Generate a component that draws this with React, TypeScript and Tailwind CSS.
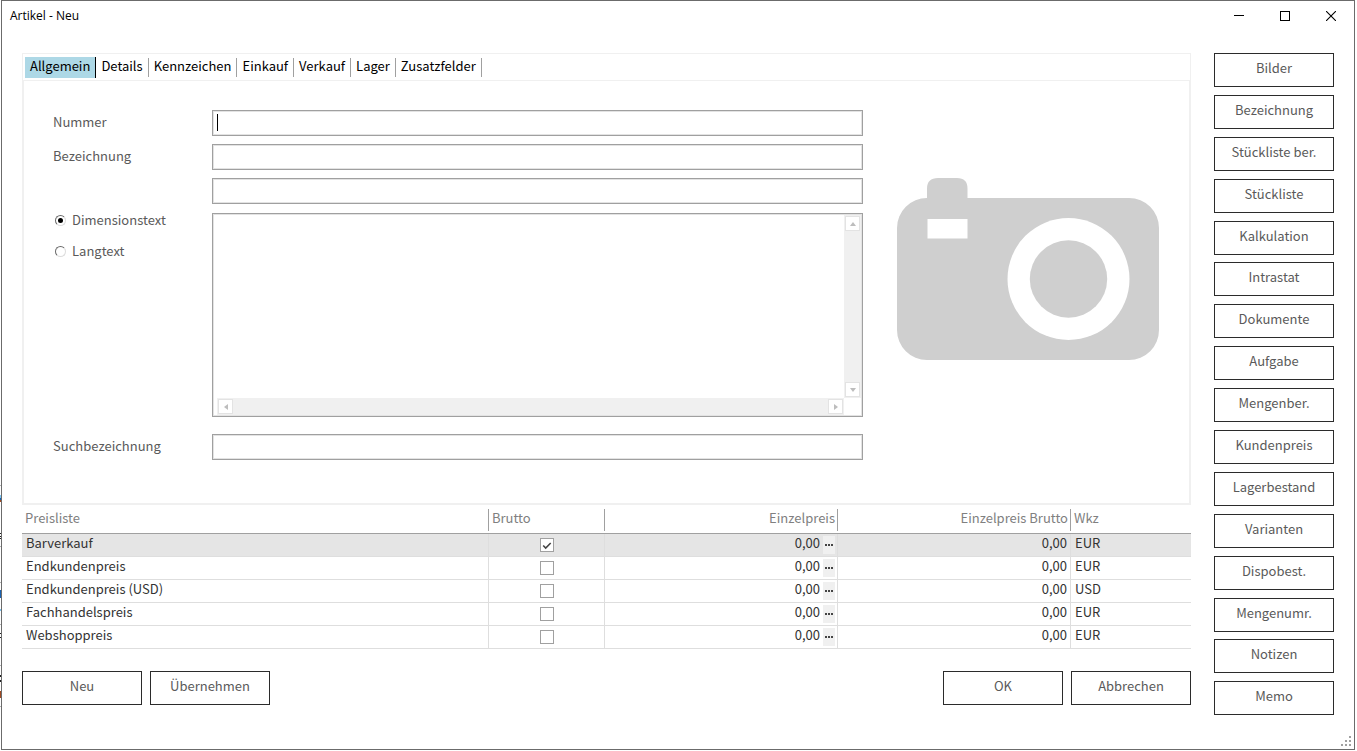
import React, { useState } from "react";

const TABS = [
  "Allgemein",
  "Details",
  "Kennzeichen",
  "Einkauf",
  "Verkauf",
  "Lager",
  "Zusatzfelder",
];

const SIDE_ACTIONS = [
  "Bilder",
  "Bezeichnung",
  "Stückliste ber.",
  "Stückliste",
  "Kalkulation",
  "Intrastat",
  "Dokumente",
  "Aufgabe",
  "Mengenber.",
  "Kundenpreis",
  "Lagerbestand",
  "Varianten",
  "Dispobest.",
  "Mengenumr.",
  "Notizen",
  "Memo",
];

interface PriceRow {
  name: string;
  gross: boolean;
  price: string;
  priceGross: string;
  currency: string;
}

const INITIAL_PRICES: PriceRow[] = [
  { name: "Barverkauf", gross: true, price: "0,00", priceGross: "0,00", currency: "EUR" },
  { name: "Endkundenpreis", gross: false, price: "0,00", priceGross: "0,00", currency: "EUR" },
  { name: "Endkundenpreis (USD)", gross: false, price: "0,00", priceGross: "0,00", currency: "USD" },
  { name: "Fachhandelspreis", gross: false, price: "0,00", priceGross: "0,00", currency: "EUR" },
  { name: "Webshoppreis", gross: false, price: "0,00", priceGross: "0,00", currency: "EUR" },
];

const FIELD =
  "h-[26px] w-full border border-[#a0a0a0] bg-white px-1 text-black inset-shadow-[0_0_0_1px_#e3e3e3] outline-none";

const ActionButton: React.FC<{ label: string }> = ({ label }) => (
  <button
    type="button"
    className="h-[34px] w-[120px] shrink-0 border border-[#2b2b2b] bg-white pb-1 text-center leading-5 text-[#5a5a5a] hover:bg-[#f0f0f0]"
  >
    {label}
  </button>
);

const ScrollButton: React.FC<{ label: string; points: string }> = ({
  label,
  points,
}) => (
  <button
    type="button"
    aria-label={label}
    className="flex size-[15px] items-center justify-center border border-[#e3e3e3] bg-white"
  >
    <svg width="8" height="8" viewBox="0 0 8 8" fill="#bdbdbd">
      <polygon points={points} />
    </svg>
  </button>
);

const TitleBar = () => (
  <header className="flex h-[30px] items-start justify-between pl-2">
    <h1 className="font-['Open_Sans'] text-xs leading-[29px] text-black">
      Artikel - Neu
    </h1>
    <div className="flex">
      <button type="button" aria-label="Minimieren" className="flex h-[29px] w-[46px] items-center justify-center">
        <svg width="10" height="11" viewBox="0 0 10 11" shapeRendering="crispEdges">
          <path d="M0 5.5h10" stroke="#000" />
        </svg>
      </button>
      <button type="button" aria-label="Maximieren" className="flex h-[29px] w-[46px] items-center justify-center">
        <svg width="10" height="10" viewBox="0 0 10 10" fill="none" shapeRendering="crispEdges">
          <rect x="0.5" y="0.5" width="9" height="9" stroke="#000" />
        </svg>
      </button>
      <button type="button" aria-label="Schließen" className="flex h-[29px] w-[46px] items-center justify-center">
        <svg width="10" height="10" viewBox="0 0 10 10" fill="none">
          <path d="M0 0l10 10M10 0l-10 10" stroke="#000" strokeWidth="1.1" />
        </svg>
      </button>
    </div>
  </header>
);

const CameraPlaceholder = () => (
  <svg
    width="262"
    height="182"
    viewBox="0 0 262 182"
    className="mt-17 shrink-0"
    role="img"
    aria-label="Kein Bild"
  >
    <path
      fill="#cfcfcf"
      d="M30 20V10.500Q30 0 41 0H60Q70.500 0 70.500 10.500V20H232A30 30 0 0 1 262 50V152A30 30 0 0 1 232 182H30A30 30 0 0 1 0 152V50A30 30 0 0 1 30 20Z"
    />
    <rect x="30.500" y="41" width="40" height="19.500" fill="#fff" />
    <circle cx="171.500" cy="101" r="61" fill="#fff" />
    <circle cx="171.500" cy="101" r="38.700" fill="#cfcfcf" />
  </svg>
);

const TextModeRadio: React.FC<{
  label: string;
  checked: boolean;
  onSelect: () => void;
}> = ({ label, checked, onSelect }) => (
  <label className="flex h-[15px] items-center gap-1.5 pl-0.5 leading-[22px]">
    <span className="relative flex size-[11px]">
      <input
        type="radio"
        name="textMode"
        checked={checked}
        onChange={onSelect}
        className="peer size-[11px] appearance-none rounded-full border border-t-[#696969] border-r-[#dcdcdc] border-b-[#dcdcdc] border-l-[#696969] bg-white"
      />
      <span className="pointer-events-none absolute inset-0 m-auto hidden size-[5px] rounded-full bg-black peer-checked:block" />
    </span>
    <span className="pb-0.5">{label}</span>
  </label>
);

const GeneralForm = () => {
  const [textMode, setTextMode] = useState("Dimensionstext");

  return (
    <div className="flex gap-[34px] border-2 border-t border-[#f0f0f0] pt-[29px] pr-[30px] pb-[43px] pl-[29px] text-[#5a5a5a]">
      <div className="grid flex-1 grid-cols-[159px_1fr] content-start gap-y-2 leading-6">
        <label htmlFor="number">Nummer</label>
        <div className="relative">
          <input id="number" type="text" className={FIELD} />
          <span className="pointer-events-none absolute top-1 left-[5px] h-[17px] w-px bg-black" />
        </div>

        <label htmlFor="name1">Bezeichnung</label>
        <input id="name1" type="text" className={FIELD} />

        <span />
        <input type="text" aria-label="Bezeichnung 2" className={FIELD} />

        <div className="flex flex-col gap-4 pt-px">
          {["Dimensionstext", "Langtext"].map((mode) => (
            <TextModeRadio
              key={mode}
              label={mode}
              checked={textMode === mode}
              onSelect={() => setTextMode(mode)}
            />
          ))}
        </div>
        <div className="mt-px mb-[9px] flex h-[204px] flex-col border border-[#a0a0a0] p-px inset-shadow-[0_0_0_1px_#e3e3e3]">
          <div className="flex flex-1">
            <textarea
              aria-label={textMode}
              className="flex-1 resize-none px-1 outline-none"
            />
            <div className="flex w-[17px] flex-col items-center justify-between bg-[#f0f0f0] py-px">
              <ScrollButton label="Nach oben" points="4,2 7,6 1,6" />
              <ScrollButton label="Nach unten" points="1,2 7,2 4,6" />
            </div>
          </div>
          <div className="flex pr-[17px] pl-[3px]">
            <div className="flex h-[17px] flex-1 items-center justify-between bg-[#f0f0f0] px-px">
              <ScrollButton label="Nach links" points="2,4 6,1 6,7" />
              <ScrollButton label="Nach rechts" points="2,1 6,4 2,7" />
            </div>
          </div>
        </div>

        <label htmlFor="search">Suchbezeichnung</label>
        <input id="search" type="text" className={FIELD} />
      </div>
      <CameraPlaceholder />
    </div>
  );
};

const PriceTable = () => {
  const [prices, setPrices] = useState(INITIAL_PRICES);

  const toggleGross = (index: number) => {
    setPrices((rows) =>
      rows.map((row, i) => (i === index ? { ...row, gross: !row.gross } : row))
    );
  };

  return (
    <table className="w-full table-fixed border-collapse leading-[18px]">
      <colgroup>
        <col />
        <col className="w-[116px]" />
        <col className="w-[233px]" />
        <col className="w-[233px]" />
        <col className="w-[120px]" />
      </colgroup>
      <thead className="text-[#808080]">
        <tr className="h-7 border-b border-[#a0a0a0] align-top *:p-0 *:pt-1 *:font-normal">
          <th className="text-left">
            <div className="h-[22px] border-r border-[#a0a0a0] pl-[3px]">Preisliste</div>
          </th>
          <th className="text-left">
            <div className="h-[22px] border-r border-[#a0a0a0] pl-[3px]">Brutto</div>
          </th>
          <th className="text-right">
            <div className="h-[22px] border-r border-[#a0a0a0] pr-0.5">Einzelpreis</div>
          </th>
          <th className="text-right">
            <div className="h-[22px] border-r border-[#a0a0a0] pr-0.5">Einzelpreis Brutto</div>
          </th>
          <th className="text-left">
            <div className="pl-[3px]">Wkz</div>
          </th>
        </tr>
      </thead>
      <tbody className="text-[#333333]">
        {prices.map((row, index) => (
          <tr
            key={row.name}
            className={`h-[23px] border-b border-[#dedede] align-top *:p-0 ${
              index === 0 ? "bg-[#e5e5e5]" : ""
            }`}
          >
            <td>
              <div className="h-[22px] border-r border-[#dedede] pl-1">{row.name}</div>
            </td>
            <td>
              <div className="flex h-[22px] justify-center border-r border-[#dedede] pt-1">
                <span className="relative size-3.5">
                  <input
                    type="checkbox"
                    aria-label={`${row.name} Brutto`}
                    checked={row.gross}
                    onChange={() => toggleGross(index)}
                    className="peer block size-3.5 appearance-none border border-[#a0a0a0] bg-white"
                  />
                  <svg
                    viewBox="0 0 14 14"
                    className="pointer-events-none absolute inset-0 hidden size-3.5 peer-checked:block"
                    fill="none"
                  >
                    <path d="M3.200 7.500l2.500 2.500 5-5" stroke="#444" strokeWidth="1.600" />
                  </svg>
                </span>
              </div>
            </td>
            <td>
              <div className="flex h-[22px] justify-end gap-[3px] border-r border-[#dedede] pr-0.5">
                {row.price}
                <button
                  type="button"
                  aria-label="Preis bearbeiten"
                  className="mt-0.5 flex h-[18px] w-3 items-center justify-center bg-[#f0f0f0]"
                >
                  <svg width="8" height="2" viewBox="0 0 8 2" fill="#444" shapeRendering="crispEdges">
                    <path d="M0 0h2v2H0zM3 0h2v2H3zM6 0h2v2H6z" />
                  </svg>
                </button>
              </div>
            </td>
            <td>
              <div className="h-[22px] border-r border-[#dedede] pr-[3px] text-right">
                {row.priceGross}
              </div>
            </td>
            <td>
              <div className="pl-1">{row.currency}</div>
            </td>
          </tr>
        ))}
      </tbody>
    </table>
  );
};

// thin strip of the window lying behind the dialog
const BackgroundEdge = () => (
  <svg
    width="1"
    height="226"
    viewBox="0 0 1 226"
    className="absolute top-[485px] left-0"
    shapeRendering="crispEdges"
    aria-hidden="true"
  >
    <path fill="#b4b4b4" d="M0 0h1v1H0zM0 61h1v1H0zM0 97h1v1H0zM0 139h1v1H0zM0 180h1v1H0zM0 221h1v1H0z" />
    <path fill="#7cc4f0" d="M0 10h1v3H0zM0 124h1v2H0z" />
    <path fill="#1a62b0" d="M0 13h1v2H0zM0 105h1v8H0z" />
    <path fill="#222" d="M0 48h1v1H0zM0 51h1v1H0zM0 53h1v1H0zM0 148h1v1H0zM0 152h1v1H0zM0 190h1v2H0zM0 195h1v2H0z" />
    <path fill="#a04a22" d="M0 15h1v2H0zM0 206h1v7H0z" />
  </svg>
);

const App = () => {
  const [activeTab, setActiveTab] = useState("Allgemein");

  return (
    <div className="relative flex min-h-screen bg-white pr-0.5 pb-px pl-px font-['Noto_Sans_CJK_SC',sans-serif] text-[13px]">
      <BackgroundEdge />
      <div className="relative flex-1 border border-[#6b6b6b] bg-white">
        <TitleBar />

        <div className="flex gap-[23px] px-5 pt-[22px]">
          <main className="min-w-0 flex-1 pb-[11px]">
            <div
              role="tablist"
              className="flex h-[27px] border border-b-0 border-[#f0f0f0] pt-[3px] pl-0.5 leading-[15px] text-black"
            >
              {TABS.map((tab) => (
                <button
                  key={tab}
                  type="button"
                  role="tab"
                  aria-selected={tab === activeTab}
                  onClick={() => setActiveTab(tab)}
                  className={
                    tab === activeTab
                      ? "h-[21px] border-r border-black bg-[#add8e6] px-[5px] pb-1"
                      : "mt-px h-[19px] border-r border-[#a0a0a0] px-[5px] pb-1"
                  }
                >
                  {tab}
                </button>
              ))}
            </div>
            <GeneralForm />
            <PriceTable />

            <div className="mt-[22px] flex gap-2">
              <ActionButton label="Neu" />
              <ActionButton label="Übernehmen" />
              <div className="flex-1" />
              <ActionButton label="OK" />
              <ActionButton label="Abbrechen" />
            </div>
          </main>

          <aside className="flex flex-col justify-between">
            {SIDE_ACTIONS.map((label) => (
              <ActionButton key={label} label={label} />
            ))}
          </aside>
        </div>

        {/* resize grip */}
        <svg
          width="10"
          height="10"
          viewBox="0 0 10 10"
          fill="#a0a0a0"
          shapeRendering="crispEdges"
          className="absolute right-[3px] bottom-[3px]"
        >
          <path d="M8 0h2v2H8zM4 4h2v2H4zM8 4h2v2H8zM0 8h2v2H0zM4 8h2v2H4zM8 8h2v2H8z" />
        </svg>
      </div>
    </div>
  );
};

export default App;
